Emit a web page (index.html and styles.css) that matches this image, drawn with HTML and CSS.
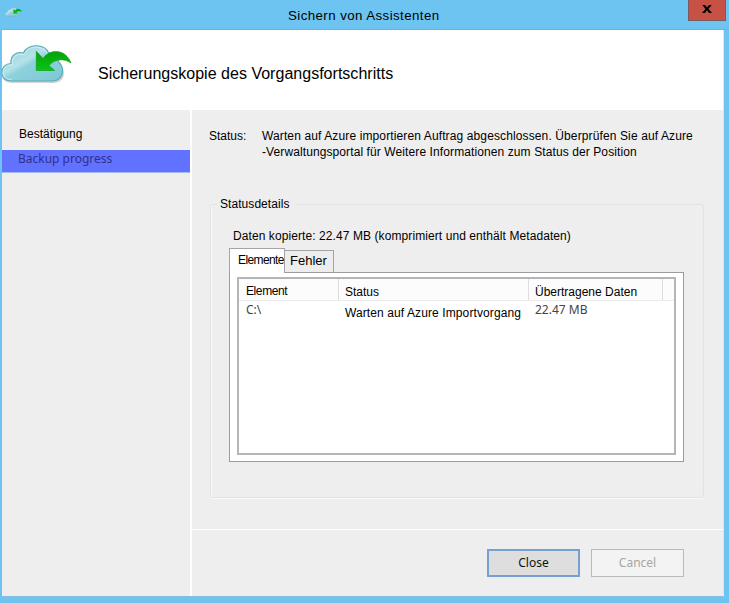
FILE: index.html
```html
<!DOCTYPE html>
<html lang="de">
<head>
<meta charset="utf-8">
<title>Sichern von Assistenten</title>
<link rel="stylesheet" href="styles.css">
</head>
<body>
<svg width="0" height="0" class="defs" aria-hidden="true">
  <defs>
    <linearGradient id="cloudFill" x1="0" y1="0" x2="1" y2="1">
      <stop offset="0" stop-color="#8fcdd8"/><stop offset=".4" stop-color="#b5e2e9"/><stop offset=".5" stop-color="#8dd1dc"/><stop offset="1" stop-color="#7cc8d6"/>
    </linearGradient>
    <linearGradient id="arrowFill" x1="0" y1="0" x2="0" y2="1">
      <stop offset="0" stop-color="#07a00c"/><stop offset="1" stop-color="#09c412"/>
    </linearGradient>
    <symbol id="logo" viewBox="0 0 72 40">
      <path d="M11 37.500C4 37.500 1 33.500 1 29C1 24 5 20.500 10.500 20.500C9.500 13 16 7.500 23.500 9.500C26 3 32 1 37.500 1.500C43 2 47 5 48.500 9.500C55 10 59 14 59 19C61.500 21 63 24 63 27.500C63 33.500 59 37.500 52.500 37.500Z" transform="translate(1 1.500)" fill="#a9a9a9" opacity=".5"/>
      <path d="M11 37C4.500 37 1.800 33 1.800 28.500C1.800 23.500 5.500 19.500 11 19.500C10 12 16 7 23.500 9C26 3 32 1.600 37.500 1.800C43 2.200 47 4.800 48.500 8.800C55 9.300 58.500 13 58.500 18C61 20 62.500 23 62.500 26.500C62.500 33 58.500 37 52.500 37Z" fill="url(#cloudFill)" stroke="#5ba9bb" stroke-width="1.100"/>
      <path d="M11.500 35.500C5.500 35.500 3.200 32 3.200 28C3.200 23.500 7 21 12.500 21C11.300 13.500 17 8.500 24.500 10.700C27 4.800 32 3 37.300 3.200C42 3.500 46 6 47.300 10" fill="none" stroke="#d4f1f5" stroke-width="1" opacity=".85"/>
      <path d="M36.300 7.200L43 14.500C50 4 66 5 71 19C63 13.500 54 15.500 49 21.500L54.500 26.500H36.300Z" fill="url(#arrowFill)" stroke="#079b0b" stroke-width=".6"/>
    </symbol>
  </defs>
</svg>
<div class="window">
  <div class="titlebar">
    <svg class="app-icon"><use href="#logo"/></svg>
    <h1 class="title">Sichern von Assistenten</h1>
    <button class="window-close" aria-label="Schließen"><svg viewBox="0 0 10 8"><path d="M.3 0H3L5 2.600L7 0H9.700L6.500 3.900L10 8H7.100L5 5.300L2.900 8H0L3.500 3.900Z"/></svg></button>
  </div>
  <div class="client">
    <header class="header">
      <svg class="logo"><use href="#logo"/></svg>
      <h2 class="heading">Sicherungskopie des Vorgangsfortschritts</h2>
    </header>
    <div class="body">
      <nav class="sidebar">
        <div class="step">Bestätigung</div>
        <div class="step current">Backup progress</div>
      </nav>
      <main class="content">
        <section class="page">
          <div class="status">
            <span class="status-label">Status:</span>
            <p class="status-text"><span class="line-a">Warten auf Azure importieren Auftrag abgeschlossen. Überprüfen Sie auf Azure</span><br><span class="line-b">-Verwaltungsportal für Weitere Informationen zum Status der Position</span></p>
          </div>
          <fieldset class="details">
            <legend>Statusdetails</legend>
            <p class="copied">Daten kopierte: 22.47 MB (komprimiert und enthält Metadaten)</p>
            <div class="tabs">
              <div class="tab active">Elemente</div>
              <div class="tab">Fehler</div>
            </div>
            <div class="tab-panel">
              <div class="list">
                <div class="row head"><span>Element</span><span>Status</span><span>Übertragene Daten</span></div>
                <div class="row"><span class="native">C:\</span><span class="job">Warten auf Azure Importvorgang</span><span class="native">22.47 MB</span></div>
              </div>
            </div>
          </fieldset>
        </section>
        <footer class="footer">
          <button class="btn primary">Close</button>
          <button class="btn" disabled>Cancel</button>
        </footer>
      </main>
    </div>
  </div>
</div>
</body>
</html>
```
FILE: styles.css
```css
* { box-sizing: border-box; }
body { margin: 0; font: 12px/16px "Liberation Sans", Arial, sans-serif; color: #000; }
h1, h2, p { margin: 0; font-weight: 400; }
.defs { display: block; height: 0; }
.window { width: 729px; height: 603px; background: #6ec4f0; padding: 0 6px 6px 2px; display: flex; flex-direction: column; overflow: hidden; }
.titlebar { height: 30px; flex: none; display: flex; align-items: flex-start; border-bottom: 1px solid #76afd0; margin-right: -6px; }
.app-icon { width: 17px; height: 10px; margin: 7px 0 0 3px; }
.title { font-size: 13.3px; line-height: 16px; margin: 8px 0 0 266px; white-space: nowrap; letter-spacing: .42px; }
.window-close { margin: 0 3px 0 auto; width: 38px; height: 21px; padding: 0; border: 1px solid #7b5960; border-top: 0; background: #c75145; display: flex; align-items: center; justify-content: center; }
.window-close svg { width: 10px; height: 8px; margin-top: -3px; }
.client { flex: 1; display: flex; flex-direction: column; background: #eee; border-bottom: 1px solid #8cbcd8; border-right: 1px solid #d3eaf5; margin-right: -1px; }
.header { height: 80px; flex: none; background: #fff; display: flex; }
.logo { width: 72px; height: 40px; margin: 14px 0 0 -2px; }
.heading { font-size: 16px; line-height: 20px; margin: 34px 0 0 26px; white-space: nowrap; letter-spacing: .02px; }
.body { flex: 1; display: flex; }
.sidebar { width: 190px; flex: none; border-right: 2px solid #fff; padding-top: 15px; }
.step { height: 25px; line-height: 18px; padding-left: 17px; }
.step.current { height: 23px; line-height: 17px; padding-left: 16px; background: #6072ff; color: #30308f; font-family: "Noto Sans", sans-serif; border-bottom: 1px solid #a5bbf5; }
.content { flex: 1; min-width: 0; display: flex; flex-direction: column; }
.page { height: 420px; border-bottom: 1px solid #fff; padding: 18px 19px 0 17px; }
.status { display: flex; white-space: nowrap; }
.status-label { width: 53px; flex: none; }
.line-a { letter-spacing: .12px; }
.line-b { letter-spacing: .1px; }
.details { margin: 36px 0 0 1px; padding: 0 18px; width: 494px; height: 302px; min-width: 0; border: 1px solid #dfe2e6; border-radius: 3px; box-shadow: inset 1px 0 #f9f9f9, 0 1px #fafafa; }
.details legend { padding: 0 6px 0 3px; margin-left: -12px; line-height: 16px; letter-spacing: .06px; }
.copied { margin: 16px 0 0 4px; white-space: nowrap; letter-spacing: .085px; }
.tabs { display: flex; align-items: flex-end; height: 28px; }
.tab { height: 22px; width: 49px; background: #ededed; border: 1px solid #a4a4a8; border-left: 0; border-bottom: 0; font-size: 13px; line-height: 19px; padding-left: 5px; white-space: nowrap; }
.tab.active { height: 25px; width: 56px; background: #fff; border: 1px solid #a4a4a8; border-bottom: 0; font-size: 12px; line-height: 22px; padding-left: 8px; position: relative; z-index: 1; margin-bottom: -1px; letter-spacing: -.6px; }
.tab-panel { width: 455px; height: 190px; border: 1px solid #9c9ca0; background: #fff; padding: 4px 7px 6px 7px; }
.list { height: 178px; border: 2px solid #b5b5b7; background: #fff; }
.row { display: grid; grid-template-columns: 100px 190px 134px 1fr; height: 22px; white-space: nowrap; }
.head { background: #fcfcfc; border-bottom: 1px solid #ececec; }
.head span { height: 21px; line-height: 27px; border-right: 1px solid #dedede; padding-left: 6px; }
.head span:first-child { letter-spacing: -.4px; padding-left: 7px; line-height: 25px; }
.job { padding: 4px 0 0 6px; letter-spacing: .1px; }
.native { font-family: "Noto Sans", sans-serif; color: #444; padding: 1px 0 0 6px; }
.native:first-child { padding-left: 7px; }
.footer { flex: 1; display: flex; justify-content: flex-end; gap: 11px; padding: 19px 39px 0 0; }
.btn { width: 93px; height: 28px; padding: 0; font: 12px/16px "Noto Sans", sans-serif; background: #f3f3f3; border: 1px solid #b8bbbd; color: #a6a6a6; }
.btn.primary { background: #dedede; border: 2px solid #799fd2; color: #111; }
```
